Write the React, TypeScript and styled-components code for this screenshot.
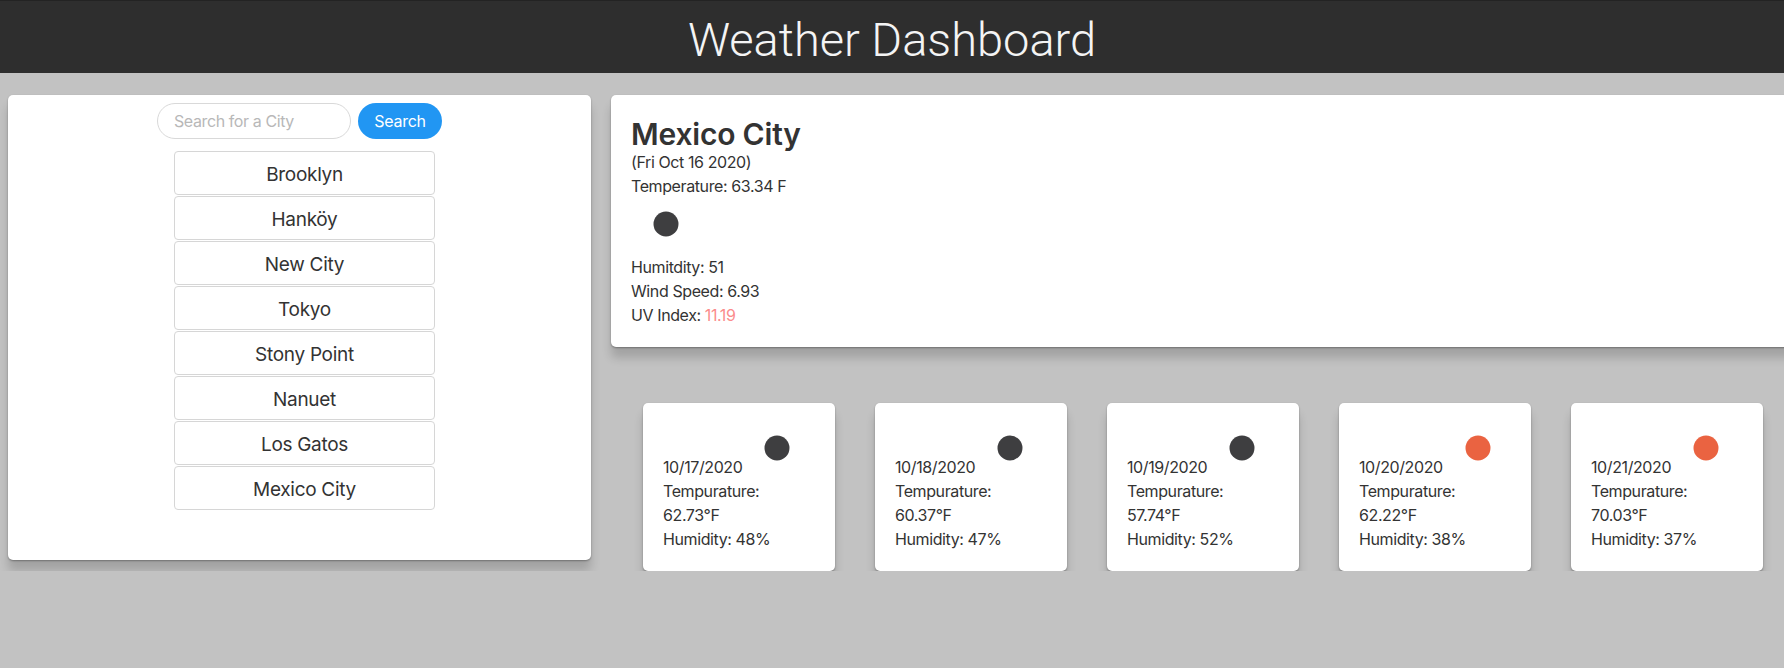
import React from "react";
import styled, { createGlobalStyle } from "styled-components";

const GlobalStyle = createGlobalStyle`
  html, body {
    margin: 0;
    padding: 0;
    background: #c2c2c2;
    overflow: hidden;
  }
  body {
    font-family: Inter, "Noto Sans", sans-serif;
    color: #333;
    font-size: 16px;
    line-height: 24px;
    letter-spacing: -0.4px;
  }
  * { box-sizing: border-box; }
`;

const Header = styled.header`
  height: 73px;
  padding-top: 4px;
  background: #2e2e2e;
  border-top: 1px solid #232323;
  display: flex;
  align-items: center;
  justify-content: center;
`;

const Title = styled.h1`
  margin: 0;
  font-family: Roboto, "Liberation Sans", sans-serif;
  font-weight: 300;
  font-size: 47px;
  letter-spacing: 0;
  line-height: 1;
  color: #f4f4f4;
`;

const Main = styled.main`
  display: flex;
  align-items: flex-start;
  gap: 20px;
  padding: 22px 0 0 8px;
  width: 2000px;
`;

const Card = styled.section`
  background: #fff;
  border-radius: 5px;
  box-shadow: 0 1px 2px rgba(0, 0, 0, 0.32), 0 11px 10px rgba(0, 0, 0, 0.16);
`;

const SearchCard = styled(Card)`
  flex: 0 0 583px;
  padding: 8px 0 49px;
`;

const SearchRow = styled.form`
  display: flex;
  justify-content: center;
  gap: 7px;
`;

const SearchInput = styled.input`
  width: 194px;
  height: 36px;
  border: 1px solid #d9d9d9;
  border-radius: 18px;
  padding: 0 16px;
  font-family: inherit;
  font-size: 16px;
  letter-spacing: -0.4px;
  color: #333;
  outline: none;
  &::placeholder { color: #b8b8b8; }
`;

const SearchButton = styled.button`
  width: 84px;
  height: 36px;
  border: none;
  border-radius: 18px;
  background: #2196f3;
  color: #fff;
  font-family: inherit;
  font-size: 16px;
  letter-spacing: -0.3px;
  cursor: pointer;
`;

const CityList = styled.ul`
  list-style: none;
  width: 271px;
  margin: 12px auto 0;
  padding: 0 0 0 10px;
`;

const CityItem = styled.li`
  height: 44px;
  margin-bottom: 1px;
  padding-top: 3px;
  border: 1px solid #d6d6d6;
  border-radius: 4px;
  display: flex;
  align-items: center;
  justify-content: center;
  font-size: 19px;
  letter-spacing: -0.3px;
  color: #333;
  background: #fff;
`;

const RightCol = styled.div`
  flex: 0 0 1200px;
  display: flex;
  flex-direction: column;
`;

const CurrentCard = styled(Card)`
  padding: 20px;
  height: 252px;
`;

const CityName = styled.h2`
  margin: 0;
  padding-top: 3px;
  font-size: 30px;
  line-height: 32px;
  font-weight: 600;
  letter-spacing: -0.2px;
  color: #333;
`;

const Line = styled.div`
  line-height: 24px;
`;

const Uv = styled.span`
  color: #fb8c8c;
`;

const BigIcon = styled.svg`
  display: block;
  margin: 1px 0 6px 10px;
`;

const ForecastRow = styled.div`
  display: flex;
  gap: 40px;
  margin-top: 56px;
  padding-left: 32px;
`;

const ForecastCard = styled(Card)`
  flex: 0 0 192px;
  height: 168px;
  padding: 20px;
`;

const SmallIcon = styled.svg`
  display: inline-block;
  vertical-align: baseline;
  margin-left: 10px;
`;

type IconProps = { color: string };

const WeatherDot = ({ color, as: Comp }: IconProps & { as: typeof BigIcon }) => (
  <Comp width="50" height="50" viewBox="0 0 50 50">
    <circle cx="25" cy="25" r="12.5" fill={color} />
  </Comp>
);

const cities = [
  "Brooklyn",
  "Hanköy",
  "New City",
  "Tokyo",
  "Stony Point",
  "Nanuet",
  "Los Gatos",
  "Mexico City",
];

const NIGHT = "#3e3e40";
const SUN = "#ea6341";

const forecast = [
  { date: "10/17/2020", temp: "62.73", hum: 48, color: NIGHT },
  { date: "10/18/2020", temp: "60.37", hum: 47, color: NIGHT },
  { date: "10/19/2020", temp: "57.74", hum: 52, color: NIGHT },
  { date: "10/20/2020", temp: "62.22", hum: 38, color: SUN },
  { date: "10/21/2020", temp: "70.03", hum: 37, color: SUN },
];

export default function App() {
  return (
    <>
      <GlobalStyle />
      <Header>
        <Title>Weather Dashboard</Title>
      </Header>
      <Main>
        <SearchCard>
          <SearchRow onSubmit={(e) => e.preventDefault()}>
            <SearchInput placeholder="Search for a City" />
            <SearchButton type="submit">Search</SearchButton>
          </SearchRow>
          <CityList>
            {cities.map((c) => (
              <CityItem key={c}>{c}</CityItem>
            ))}
          </CityList>
        </SearchCard>
        <RightCol>
          <CurrentCard>
            <CityName>Mexico City</CityName>
            <Line>(Fri Oct 16 2020)</Line>
            <Line>Temperature: 63.34 F</Line>
            <WeatherDot color={NIGHT} as={BigIcon} />
            <Line>Humitdity: 51</Line>
            <Line>Wind Speed: 6.93</Line>
            <Line>
              UV Index: <Uv>11.19</Uv>
            </Line>
          </CurrentCard>
          <ForecastRow>
            {forecast.map((f) => (
              <ForecastCard key={f.date}>
                <Line>
                  {f.date}
                  <WeatherDot color={f.color} as={SmallIcon} />
                </Line>
                <Line>
                  Tempurature: {f.temp}°F
                </Line>
                <Line>Humidity: {f.hum}%</Line>
              </ForecastCard>
            ))}
          </ForecastRow>
        </RightCol>
      </Main>
    </>
  );
}
